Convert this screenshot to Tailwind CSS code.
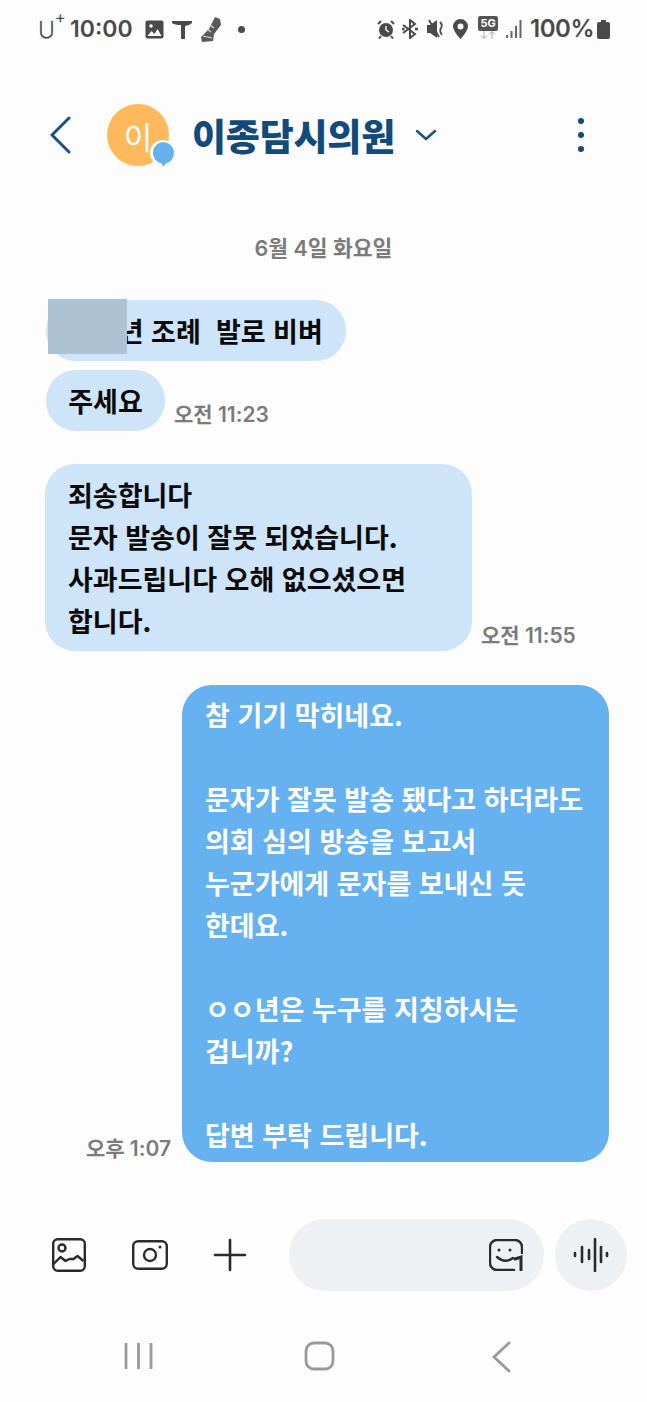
<!DOCTYPE html>
<html lang="ko">
<head>
    <meta charset="UTF-8">
    <meta name="viewport" content="width=device-width, initial-scale=1.0">
    <title>메시지</title>
    <script src="https://cdn.jsdelivr.net/npm/@tailwindcss/browser@4"></script>
</head>
<body class="bg-[#fdfdfd] font-['Inter','Noto_Sans_CJK_KR',sans-serif]">
    <div class="w-[647px] h-[1402px] overflow-hidden flex flex-col">
        <!-- Status bar -->
        <header class="h-[58px] flex items-center pl-[38px] pr-[37px] text-[#4a4a4a] font-semibold">
            <span class="w-[26px] text-[23px] font-light leading-none whitespace-nowrap">U<sup class="text-[16px] font-normal align-[7px] leading-none">+</sup></span>
            <span class="ml-[6px] text-[23px] leading-none">10:00</span>
            <svg class="ml-[12px]" width="19" height="19" viewBox="0 0 19 19"><rect x="0.500" y="0.500" width="18" height="18" rx="2" fill="#4a4a4a"/><path d="M2.500 16l4-5 3 3 3-5 4 7z" fill="#fff"/><circle cx="6" cy="6" r="1.800" fill="#fff"/></svg>
            <svg class="ml-[8px]" width="20" height="19" viewBox="0 0 20 19"><path d="M0 1h20v2q-3 3-7 3v13H9V5Q3 5 0 3z" fill="#4a4a4a"/></svg>
            <svg class="ml-[8px]" width="22" height="27" viewBox="0 0 22 27"><path d="M15 1l5 2 1 6-7 9-1 7-11 1-1-5 8-8z" fill="#5a5a5a"/><path d="M10 9l4 3M7 13l4 3M3 20l9 2" stroke="#ddd" stroke-width="1.200"/></svg>
            <span class="ml-[16px] w-[7px] h-[7px] rounded-full bg-[#4a4a4a]"></span>
            <div class="ml-auto flex items-center">
                <svg width="18" height="20" viewBox="0 0 18 20"><circle cx="9" cy="11" r="7" fill="#4a4a4a"/><path d="M9 7v4l3 2" stroke="#fff" stroke-width="1.400" fill="none"/><path d="M1 5l3-3M17 5l-3-3M4 17l-2 2.500M14 17l2 2.500" stroke="#4a4a4a" stroke-width="2"/></svg>
                <svg class="ml-[7px]" width="16" height="20" viewBox="0 0 16 20"><path d="M1 6l12 9-5 4V1l5 4L1 14" stroke="#4a4a4a" stroke-width="2" fill="none"/><path d="M0 10h2.500M13 10h3" stroke="#4a4a4a" stroke-width="2.400"/></svg>
                <svg class="ml-[9px]" width="18" height="20" viewBox="0 0 18 20"><path d="M0 6h3l7-5v18l-7-5H0z" fill="#4a4a4a"/><path d="M2 1l10 17M13 3q3 3 1 6t1 7" stroke="#4a4a4a" stroke-width="1.800" fill="none"/></svg>
                <svg class="ml-[8px]" width="15" height="20" viewBox="0 0 15 20"><path d="M7.500 0a7.500 7.500 0 0 1 7.500 7.500C15 12 7.500 20 7.500 20S0 12 0 7.500A7.500 7.500 0 0 1 7.500 0z" fill="#4a4a4a"/><circle cx="7.500" cy="7.500" r="3" fill="#fff"/></svg>
                <div class="ml-[10px] w-[20px] flex flex-col items-center -mt-[4px]">
                    <span class="w-[20px] h-[15px] rounded-[2px] bg-[#555] text-white text-[11px] leading-[15px] text-center font-bold">5G</span>
                    <svg width="18" height="8" viewBox="0 0 18 8"><path d="M5 0v7M2 4.500l3 3 3-3" stroke="#aaa" fill="none"/><path d="M13 8V1M10 3.500l3-3 3 3" stroke="#aaa" fill="none"/></svg>
                </div>
                <svg class="ml-[7px]" width="17" height="18" viewBox="0 0 17 18"><path d="M2 18v-3M6.500 18v-7M11 18V6M15.500 18V0" stroke="#666" stroke-width="2"/></svg>
                <span class="ml-[8px] text-[24px] leading-none tracking-[-0.5px]">100%</span>
                <svg class="ml-[3px]" width="13" height="19" viewBox="0 0 13 19"><path d="M4 0h5v2h2a2 2 0 0 1 2 2v13a2 2 0 0 1-2 2H2a2 2 0 0 1-2-2V4a2 2 0 0 1 2-2h2z" fill="#4a4a4a"/></svg>
            </div>
        </header>

        <!-- Title bar -->
        <div class="relative h-[80px] mt-[37px] flex items-center pl-[48px] pr-[63px]">
            <svg width="24" height="38" viewBox="0 0 24 38"><path d="M21 2L4 19l17 17" stroke="#1a4f7f" stroke-width="3" stroke-linecap="round" stroke-linejoin="round" fill="none"/></svg>
            <div class="relative ml-[35px] w-[62px] h-[62px] rounded-full bg-[#fdb95a] flex items-center justify-center text-white text-[31px] leading-none font-['Noto_Sans_CJK_KR']">
                이
                <svg class="absolute left-[43px] top-[36px]" width="26" height="28" viewBox="0 0 26 28"><circle cx="13" cy="13" r="13" fill="#fdfdfd"/><path d="M13 2a11 11 0 0 1 3 21.600L13 27l-1-3.200A11 11 0 0 1 13 2z" fill="#67b1ef"/></svg>
            </div>
            <span class="ml-[23px] text-[#134a7c] text-[37px] leading-none font-black font-['Noto_Sans_CJK_KR'] tracking-[-0.2px]">이종담시의원</span>
            <svg class="ml-[20px]" width="22" height="12" viewBox="0 0 22 12"><path d="M2 2l9 8 9-8" stroke="#1a4f7f" stroke-width="2.400" stroke-linecap="round" stroke-linejoin="round" fill="none"/></svg>
            <div class="ml-auto flex flex-col gap-[8px]">
                <span class="w-[6px] h-[6px] rounded-full bg-[#134a7c]"></span>
                <span class="w-[6px] h-[6px] rounded-full bg-[#134a7c]"></span>
                <span class="w-[6px] h-[6px] rounded-full bg-[#134a7c]"></span>
            </div>
        </div>

        <!-- Messages -->
        <main class="flex-1 flex flex-col font-['Noto_Sans_CJK_KR','Inter',sans-serif] text-[27px] leading-[42px] font-semibold text-[#0a0a0a]">
            <p class="mt-[59px] text-center text-[21.500px] leading-[28px] font-semibold text-[#7b7b7b] font-['Inter','Noto_Sans_CJK_KR']">6월 4일 화요일</p>

            <div class="relative mt-[38px] ml-[46px] w-[300px] h-[61px] rounded-[30px] bg-[#cde4f9] pl-[23px] flex items-center">
                <span class="whitespace-pre">ㅇㅇ년 조례  발로 비벼</span>
                <span class="absolute left-[2px] -top-[1px] w-[79px] h-[55px] bg-[#adc2d2]"></span>
            </div>

            <div class="mt-[9px] ml-[46px] flex items-end">
                <div class="w-[119px] h-[61px] rounded-[30px] bg-[#cde4f9] flex items-center justify-center">주세요</div>
                <span class="ml-[9px] mb-[2px] text-[21px] leading-[28px] font-semibold text-[#7b7b7b] font-['Inter','Noto_Sans_CJK_KR']">오전 11:23</span>
            </div>

            <div class="mt-[33px] ml-[45px] flex items-end">
                <div class="w-[427px] h-[187px] rounded-[30px] bg-[#cde4f9] px-[23px] py-[10px]">
                    죄송합니다<br>문자 발송이 잘못 되었습니다.<br>사과드립니다 오해 없으셨으면<br>합니다.
                </div>
                <span class="ml-[9px] mb-[1px] text-[21px] leading-[28px] font-semibold text-[#7b7b7b] font-['Inter','Noto_Sans_CJK_KR']">오전 11:55</span>
            </div>

            <div class="mt-[34px] flex items-end justify-end pr-[38px]">
                <span class="mr-[11px] mb-[-1px] text-[21px] leading-[28px] font-semibold text-[#7b7b7b] font-['Inter','Noto_Sans_CJK_KR']">오후 1:07</span>
                <div class="w-[427px] h-[477px] rounded-[30px] bg-[#66b1ef] px-[23px] py-[9px] text-white">
                    참 기기 막히네요.<br><br>문자가 잘못 발송 됐다고 하더라도<br>의회 심의 방송을 보고서<br>누군가에게 문자를 보내신 듯<br>한데요.<br><br>ㅇㅇ년은 누구를 지칭하시는<br>겁니까?<br><br>답변 부탁 드립니다.
                </div>
            </div>
        </main>

        <!-- Input bar -->
        <div class="h-[72px] flex items-center pl-[52px] pr-[19px]">
            <svg width="34" height="34" viewBox="0 0 34 34" fill="none" stroke="#2b2b2b" stroke-width="2.400"><rect x="1.200" y="1.200" width="31.600" height="31.600" rx="4.500"/><circle cx="10" cy="10" r="3.500"/><path d="M1.500 26l7-7 5 4 4-2 4 0 4-3 6 5" stroke-linejoin="round"/></svg>
            <svg class="ml-[46px]" width="36" height="30" viewBox="0 0 36 30" fill="none" stroke="#2b2b2b" stroke-width="2.400"><rect x="1.200" y="1.200" width="33.600" height="27.600" rx="5"/><circle cx="18" cy="15" r="6"/><circle cx="28" cy="7" r="1.500" fill="#2b2b2b" stroke="none"/></svg>
            <svg class="ml-[45px]" width="34" height="34" viewBox="0 0 34 34" stroke="#2b2b2b" stroke-width="2.600" stroke-linecap="round"><path d="M17 2v30M2 17h30"/></svg>
            <div class="ml-[42px] w-[255px] h-[72px] rounded-[36px] bg-[#edf1f4] flex items-center justify-end pr-[21px]">
                <svg width="34" height="32" viewBox="0 0 34 32" fill="none" stroke="#2b2b2b" stroke-width="2.400" stroke-linecap="round"><path d="M33 14V8a7 7 0 0 0-7-7H8a7 7 0 0 0-7 7v16a7 7 0 0 0 7 7h17"/><circle cx="10" cy="11" r="1.500" fill="#2b2b2b" stroke="none"/><circle cx="21" cy="11" r="1.500" fill="#2b2b2b" stroke="none"/><path d="M8 18q8 7 16 1"/><path d="M26 20l6-2v13" stroke-width="3"/></svg>
            </div>
            <div class="ml-[11px] w-[72px] h-[72px] rounded-full bg-[#edf1f4] flex items-center justify-center">
                <svg width="36" height="34" viewBox="0 0 36 34" stroke="#2b2b2b" stroke-width="2.600" stroke-linecap="round"><path d="M2 15v3M9 9v15M16 12v9M22 1v32M28 9v15M34 15v3"/></svg>
            </div>
        </div>

        <!-- Navigation bar -->
        <nav class="h-[111px] relative flex items-start pt-[50px]">
            <svg class="ml-[124px]" width="30" height="30" viewBox="0 0 30 30" stroke="#999" stroke-width="2.800"><path d="M2 2v26M14.500 2v26M27 2v26"/></svg>
            <svg class="ml-[150px]" width="31" height="30" viewBox="0 0 31 30" fill="none" stroke="#999" stroke-width="2.800"><rect x="2" y="2" width="27" height="26" rx="8"/></svg>
            <svg class="ml-[156px]" width="20" height="32" viewBox="0 0 20 32" fill="none" stroke="#999" stroke-width="2.800" stroke-linecap="round"><path d="M18 2L3 16l15 14"/></svg>
        </nav>
    </div>
</body>
</html>
